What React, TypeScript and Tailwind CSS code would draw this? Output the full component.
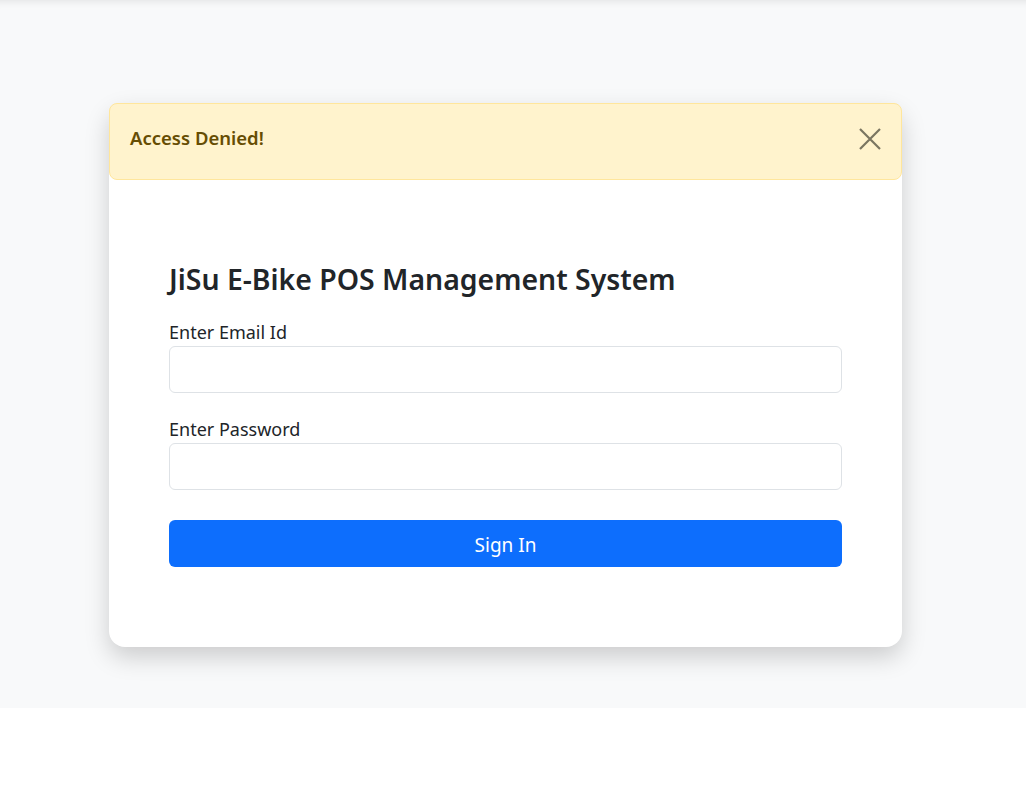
export default function App() {
  return (
    <div className="min-h-screen bg-white font-['Noto_Sans','Open_Sans',sans-serif] text-[#212529]">
      <div className="h-[708px] bg-[#f8f9fa] pt-[103px] shadow-[inset_0_10px_10px_-10px_rgba(0,0,0,0.12)]">
        <div className="ml-[109px] w-[793px] rounded-2xl bg-white shadow-[0_10px_24px_rgba(0,0,0,0.18)]">
          <div className="flex h-[77px] items-start justify-between rounded-lg border border-[#ffe69c] bg-[#fff3cd] pl-5 pr-5 pt-[22px] text-[#664d03]">
            <span className="text-[18.5px] font-semibold leading-6">Access Denied!</span>
            <button className="mt-[2px] text-[#7a7560]">
              <svg width="22" height="22" viewBox="0 0 22 22" fill="none" stroke="currentColor" strokeWidth="2.2">
                <path d="M1 1L21 21M21 1L1 21" />
              </svg>
            </button>
          </div>

          <div className="px-[60px] pb-[80px] pt-[82px]">
            <h3 className="mb-[24px] text-[28.4px] font-semibold leading-[34px]">
              JiSu E-Bike POS Management System
            </h3>

            <label className="block pb-[2px] text-[18px] leading-6">Enter Email Id</label>
            <input
              type="email"
              className="mb-[24px] block h-[47px] w-full rounded-md border border-[#dee2e6] px-4 text-lg outline-none"
            />

            <label className="block pb-[2px] text-[18px] leading-6">Enter Password</label>
            <input
              type="password"
              className="mb-[30px] block h-[47px] w-full rounded-md border border-[#dee2e6] px-4 text-lg outline-none"
            />

            <button className="block h-[47px] w-full rounded-md bg-[#0d6efd] pt-1 text-[19px] text-white">
              Sign In
            </button>
          </div>
        </div>
      </div>
    </div>
  )
}
